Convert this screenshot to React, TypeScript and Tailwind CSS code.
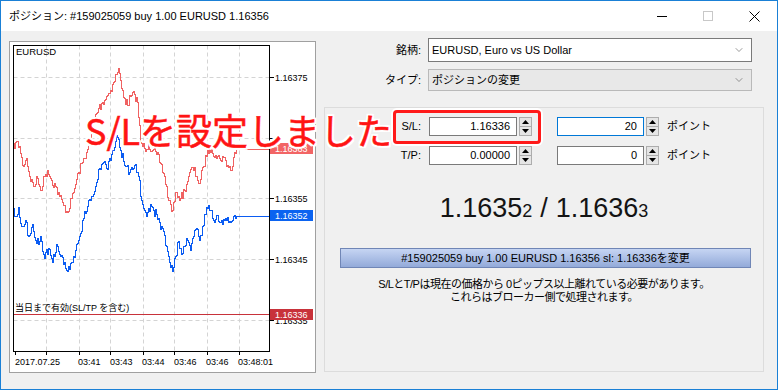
import { ChevronDown } from 'lucide-react';

const ui = "font-['Liberation_Sans','Noto_Sans_CJK_JP',sans-serif]";

// bid / ask keypoints in page coordinates
const blueKeys: [number, number][] = [
    [13, 210], [16, 216], [19, 207], [22, 226], [26, 220], [29, 236], [33, 224], [37, 243], [41, 236], [45, 258],
    [49, 248], [53, 262], [57, 244], [61, 256], [65, 262], [68, 271], [72, 262], [76, 250], [80, 236], [84, 218],
    [88, 206], [92, 196], [96, 186], [100, 168], [104, 162], [107, 168], [110, 158], [113, 150], [116, 141], [118, 137],
    [121, 150], [124, 161], [127, 166], [130, 172], [133, 169], [136, 164], [139, 176], [142, 200], [145, 210], [148, 212],
    [151, 204], [154, 210], [157, 214], [160, 222], [164, 231], [167, 246], [170, 262], [173, 271], [176, 256], [179, 241],
    [182, 254], [185, 246], [188, 240], [191, 250], [194, 236], [197, 228], [200, 240], [203, 226], [206, 214], [209, 205],
    [212, 210], [215, 222], [218, 215], [221, 222], [225, 220], [229, 222], [233, 220], [237, 216], [269, 216],
];

const redKeys: [number, number][] = [
    [13, 150], [16, 142], [20, 146], [23, 165], [27, 158], [30, 176], [34, 186], [38, 178], [41, 190], [45, 176],
    [48, 170], [52, 180], [56, 186], [60, 196], [64, 205], [68, 212], [72, 198], [75, 188], [79, 172], [83, 162],
    [87, 152], [91, 140], [95, 118], [99, 108], [103, 102], [107, 96], [111, 90], [114, 82], [117, 74], [119, 68],
    [122, 88], [125, 98], [128, 105], [131, 96], [135, 94], [138, 102], [141, 142], [145, 148], [149, 144], [153, 150],
    [157, 154], [161, 163], [165, 176], [169, 200], [173, 210], [177, 192], [181, 198], [185, 190], [189, 176], [193, 167],
    [197, 176], [200, 183], [204, 166], [208, 150], [212, 148], [216, 155], [220, 158], [224, 157], [228, 165], [232, 170],
    [235, 152], [238, 149], [269, 149],
];

function stepPath(keys: [number, number][], seed: number) {
    let s = seed;
    const rnd = () => {
        s = (s * 16807) % 2147483647;
        return s / 2147483647;
    };
    let d = `M${keys[0][0]} ${keys[0][1]}`;
    for (let i = 0; i < keys.length - 1; i++) {
        const [x0, y0] = keys[i];
        const [x1, y1] = keys[i + 1];
        if (x1 - x0 > 15) {
            d += ` H${x1}`;
            continue;
        }
        for (let x = x0 + 1; x <= x1; x++) {
            const t = (x - x0) / (x1 - x0);
            const j = x === x1 ? 0 : (rnd() - 0.5) * 9;
            d += ` V${Math.round(y0 + (y1 - y0) * t + j)} H${x}`;
        }
    }
    return d;
}

const gridX = [46, 79, 110, 143, 174, 207, 239];
const gridY = [77, 138, 198, 259, 320];
// 1.16365 sits under the annotation, so it's left out
const axis = [
    { y: 77, label: '1.16375' },
    { y: 198, label: '1.16355' },
    { y: 259, label: '1.16345' },
    { y: 320, label: '1.16335' },
];
const times = [
    { x: 15, t: '2017.07.25' },
    { x: 78, t: '03:41' },
    { x: 110, t: '03:43' },
    { x: 142, t: '03:44' },
    { x: 174, t: '03:46' },
    { x: 206, t: '03:46' },
    { x: 238, t: '03:48:01' },
];

function Chart() {
    const font = 'Liberation Sans, Noto Sans CJK JP, sans-serif';
    return (
        <svg width={305} height={330} viewBox="10 42 305 330" className="block">
            <g stroke="#d4d4d4" strokeDasharray="4 3" transform="translate(0.5 0.5)">
                {gridX.map((x) => (
                    <line key={x} x1={x} y1={45} x2={x} y2={351} />
                ))}
                {gridY.map((y) => (
                    <line key={y} x1={13} y1={y} x2={269} y2={y} />
                ))}
            </g>
            <g fill="none" strokeWidth={1} shapeRendering="crispEdges" transform="translate(0.5 0.5)">
                <path d={stepPath(redKeys, 7)} stroke="#f06262" />
                <path d={stepPath(blueKeys, 13)} stroke="#0b5cf2" />
                <line x1={13} y1={314} x2={269} y2={314} stroke="#c8323a" />
                <rect x={13} y={45} width={256} height={306} stroke="#000" />
                {gridY.map((y) => (
                    <line key={y} x1={269} y1={y} x2={273} y2={y} stroke="#000" />
                ))}
                {gridX.map((x) => (
                    <line key={x} x1={x} y1={351} x2={x} y2={354} stroke="#000" />
                ))}
                <line x1={15} y1={351} x2={15} y2={354} stroke="#000" />
            </g>
            <text x={16} y={55} fontSize={9.5} fontFamily={font} fill="#000">EURUSD</text>
            <text x={15} y={311} fontSize={9} fontFamily={font} fill="#000">当日まで有効(SL/TP を含む)</text>
            {axis.map((g) => (
                <text key={g.y} x={275} y={g.y + 3.5} fontSize={9} fontFamily={font} fill="#000">
                    {g.label}
                </text>
            ))}
            {times.map((t, i) => (
                <text key={i} x={t.x} y={365} fontSize={9} fontFamily={font} fill="#000">
                    {t.t}
                </text>
            ))}
            <rect x={270} y={143} width={43} height={11} fill="#f26565" />
            <text x={275} y={152} fontSize={9} fontFamily={font} fill="#fff">1.16363</text>
            <rect x={270} y={210} width={43} height={11} fill="#0b63f0" />
            <text x={275} y={219} fontSize={9} fontFamily={font} fill="#fff">1.16352</text>
            <rect x={270} y={309} width={43} height={11} fill="#c8323a" />
            <text x={275} y={318} fontSize={9} fontFamily={font} fill="#fff">1.16336</text>
        </svg>
    );
}

function Spinner() {
    return (
        <div className="flex flex-col w-[13px] h-[19px] border border-[#adadad] bg-[#e5e5e5]">
            <div className="flex-1 flex items-center justify-center border-b border-[#adadad]">
                <svg width="7" height="4" viewBox="0 0 7 4"><path d="M0 4 L3.5 0 L7 4 Z" fill="#000" /></svg>
            </div>
            <div className="flex-1 flex items-center justify-center">
                <svg width="7" height="4" viewBox="0 0 7 4"><path d="M0 0 L3.5 4 L7 0 Z" fill="#000" /></svg>
            </div>
        </div>
    );
}

function NumRow({ label, price, points, focused }: { label: string; price: string; points: string; focused?: boolean }) {
    return (
        <div className="flex items-center h-[19px] text-[11px]">
            <div className="w-[96px] text-right">{label}</div>
            <div className="ml-[8px] w-[88px] h-[19px] bg-white border border-[#7a7a7a] flex items-center justify-end pr-[6px]">
                {price}
            </div>
            <div className="ml-[2px]"><Spinner /></div>
            <div className={`ml-[25px] w-[87px] h-[19px] bg-white border flex items-center justify-end pr-[6px] ${focused ? 'border-[#0078d7]' : 'border-[#7a7a7a]'}`}>
                {points}
            </div>
            <div className="ml-[2px]"><Spinner /></div>
            <div className="ml-[8px]">ポイント</div>
        </div>
    );
}

export default function App() {
    return (
        <div className={`relative w-[778px] h-[390px] border border-[#1a80d6] bg-white flex flex-col overflow-hidden text-black ${ui}`}>
            {/* Title bar */}
            <div className="h-[30px] flex items-center shrink-0">
                <div className="pl-[8px] text-[11px] flex-1">ポジション: #159025059 buy 1.00 EURUSD 1.16356</div>
                <div className="w-[46px] h-[30px] flex items-center justify-center">
                    <div className="w-[10px] h-px bg-black" />
                </div>
                <div className="w-[46px] h-[30px] flex items-center justify-center">
                    <div className="w-[10px] h-[10px] border border-[#c8c8c8]" />
                </div>
                <div className="w-[46px] h-[30px] flex items-center justify-center">
                    <svg width="11" height="11" viewBox="0 0 11 11"><path d="M0.5 0.5 L10.5 10.5 M10.5 0.5 L0.5 10.5" stroke="#000" strokeWidth="1" /></svg>
                </div>
            </div>

            {/* Body */}
            <div className="flex-1 bg-[#f0f0f0] flex pl-[8px] pt-[7px]">
                <div className="mt-[3px] w-[307px] h-[332px] border border-[#a0a0a0] bg-white shrink-0">
                    <Chart />
                </div>

                <div className="ml-[8px] w-[440px] flex flex-col text-[11px]">
                    <div className="flex items-center h-[24px]">
                        <div className="w-[97px] text-right">銘柄:</div>
                        <div className="ml-[7px] w-[324px] h-[24px] bg-white border border-[#7a7a7a] flex items-center pl-[3px] pr-[6px]">
                            <span className="flex-1">EURUSD, Euro vs US Dollar</span>
                            <ChevronDown size={12} strokeWidth={1.2} color="#555" />
                        </div>
                    </div>
                    <div className="flex items-center h-[22px] mt-[7px]">
                        <div className="w-[97px] text-right">タイプ:</div>
                        <div className="ml-[7px] w-[324px] h-[22px] bg-[#e8e8e8] border border-[#b9b9b9] flex items-center pl-[3px] pr-[6px]">
                            <span className="flex-1">ポジションの変更</span>
                            <ChevronDown size={12} strokeWidth={1.2} color="#555" />
                        </div>
                    </div>

                    {/* Group box */}
                    <div className="mt-[16px] h-[265px] border border-[#dcdcdc] flex flex-col pt-[9px]">
                        <NumRow label="S/L:" price="1.16336" points="20" focused />
                        <div className="mt-[10px]">
                            <NumRow label="T/P:" price="0.00000" points="0" />
                        </div>

                        <div className="mt-[26px] h-[35px] flex items-baseline justify-center text-[27px] leading-[35px] text-[#141414]">
                            <span>1.1635</span>
                            <span className="text-[18px]">2</span>
                            <span className="mx-[8px]">/</span>
                            <span>1.1636</span>
                            <span className="text-[18px]">3</span>
                        </div>

                        <div className="mt-[22px] ml-[15px] mr-[12px] h-[20px] border border-[#7086b6] bg-gradient-to-b from-[#c6d5f3] to-[#93aad9] flex items-center justify-center">
                            #159025059 buy 1.00 EURUSD 1.16356 sl: 1.16336を変更
                        </div>

                        <div className="mt-[10px] text-center leading-[13px] tracking-[-0.5px]">
                            <div>S/LとT/Pは現在の価格から 0ピップス以上離れている必要があります。</div>
                            <div>これらはブローカー側で処理されます。</div>
                        </div>
                    </div>
                </div>
            </div>

            {/* Annotation overlay */}
            <div className="absolute left-[392px] top-[109px] w-[148px] h-[34px] border-[3px] border-[#ff1a1a] rounded-[4px] shadow-[0_0_0_2px_#fff]" />
            <div className="absolute left-[84px] top-[110px] text-[36px] leading-[36px] text-[#ff1414] font-['Noto_Sans_CJK_JP',sans-serif] whitespace-nowrap [-webkit-text-stroke:0.5px_#ff1414] [text-shadow:2px_0_#fff,-2px_0_#fff,0_2px_#fff,0_-2px_#fff,2px_2px_#fff,-2px_-2px_#fff,2px_-2px_#fff,-2px_2px_#fff]">
                S/Lを設定しました
            </div>
        </div>
    );
}
